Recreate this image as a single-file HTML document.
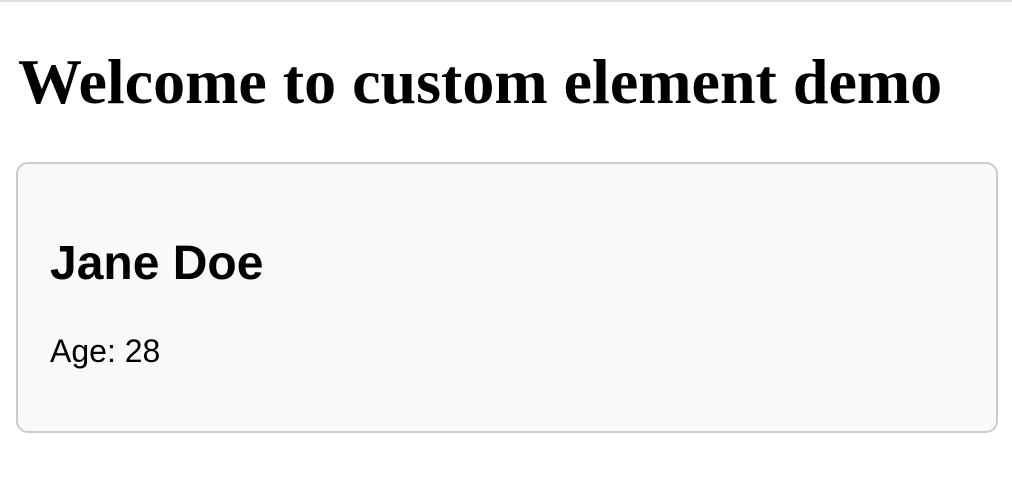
<!DOCTYPE html>
<html><head><meta charset="utf-8"><style>
html,body{margin:0;padding:0;background:#fff;width:1012px;height:488px;overflow:hidden;position:relative}
.top{position:absolute;left:0;top:0;width:1012px;height:2px;background:#e0e0e0}
h1{position:absolute;left:18px;top:42px;margin:0;font:bold 64px/80px "Liberation Serif",serif;color:#000;white-space:nowrap}
.card{position:absolute;left:16px;top:162px;width:978px;height:267px;border:2px solid #ccc;border-radius:12px;background:#f9f9f9}
h2{position:absolute;left:32px;top:70px;margin:0;font:bold 48px/60px "Liberation Sans",sans-serif;color:#000}
p{position:absolute;left:32px;top:168px;margin:0;font:32px/38px "Liberation Sans",sans-serif;color:#000}
</style></head><body>
<div class="top"></div>
<h1>Welcome to custom element demo</h1>
<div class="card"><h2>Jane Doe</h2><p>Age: 28</p></div>
</body></html>
